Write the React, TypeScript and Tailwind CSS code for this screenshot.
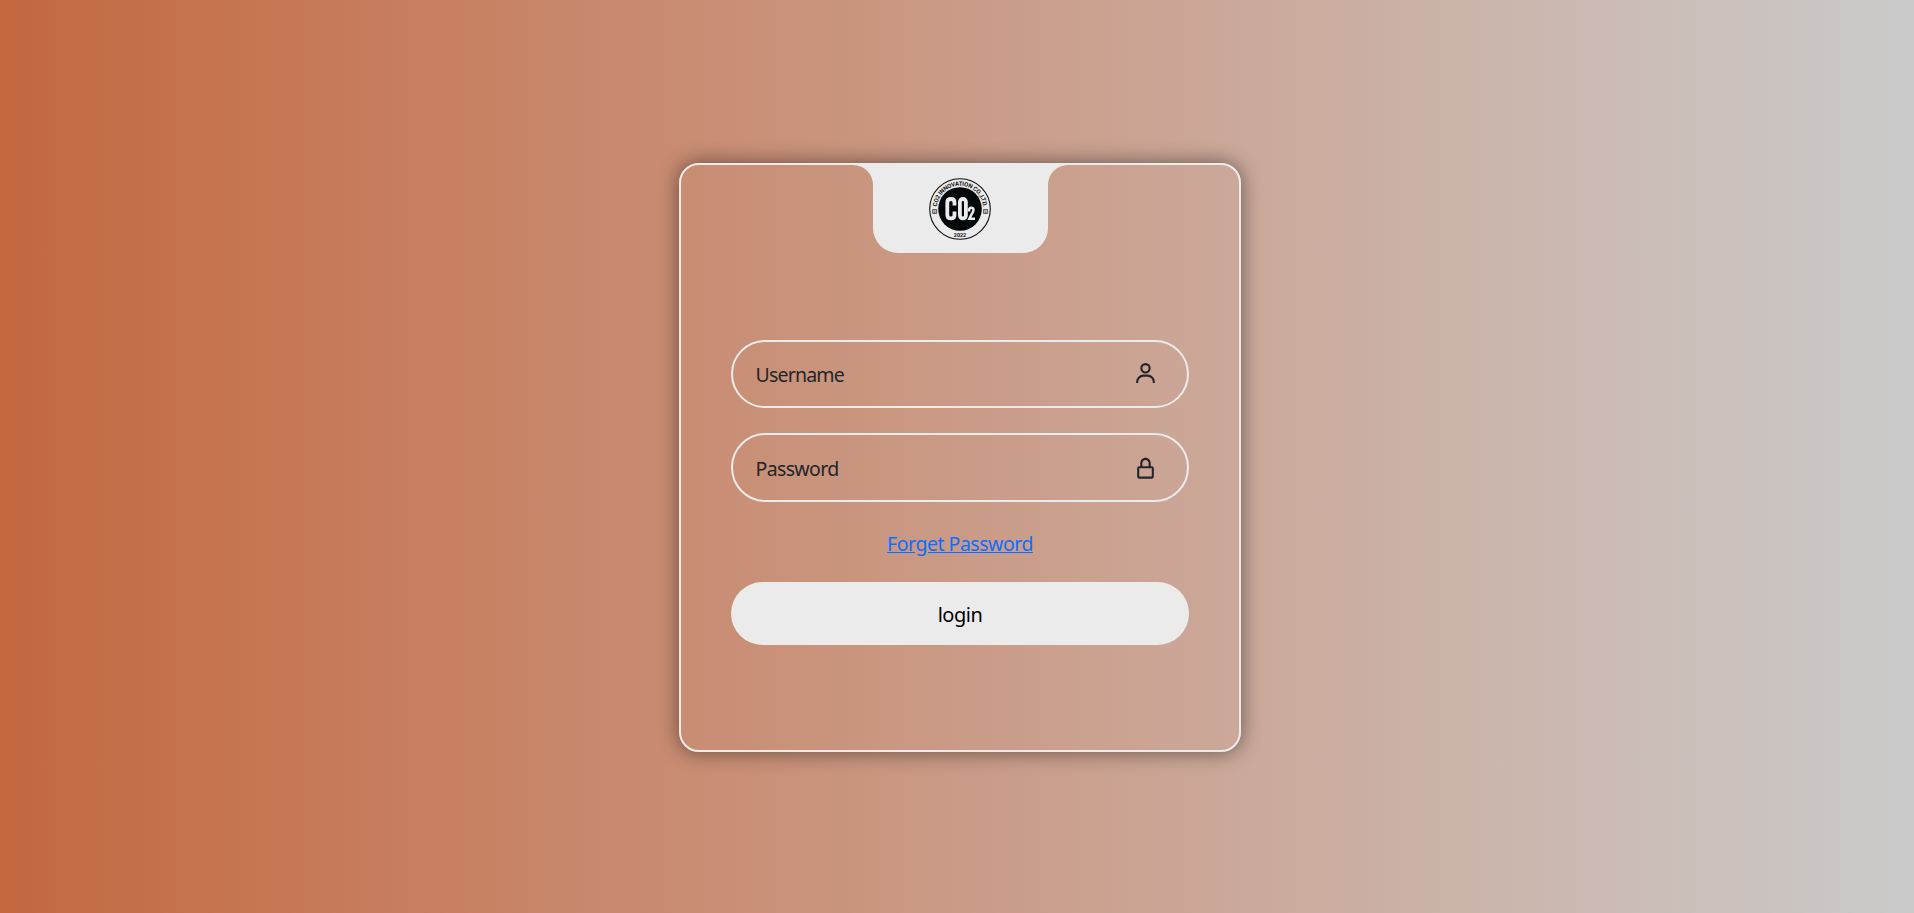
import type { ReactNode } from "react";

function Logo() {
  return (
    <svg viewBox="0 0 62 62" className="h-[62px] w-[62px]" aria-label="CO2 Innovation">
      <defs>
        <path id="ring-top" d="M 7.7 31 A 23.3 23.3 0 0 1 54.3 31" />
      </defs>
      <circle cx="31" cy="31" r="30.3" fill="none" stroke="#0b0f0f" strokeWidth="1.1" />
      <circle cx="31" cy="31" r="21.8" fill="#030808" />
      <text fontFamily="Roboto, sans-serif" fontWeight="700" fontSize="6" letterSpacing="-0.2" fill="#111">
        <textPath href="#ring-top" startOffset="50%" textAnchor="middle">
          CO2 INNOVATION CO.,LTD.
        </textPath>
      </text>
      <text
        x="31"
        y="59"
        textAnchor="middle"
        fontFamily="Roboto, sans-serif"
        fontWeight="700"
        fontSize="5.4"
        fill="#111"
      >
        2022
      </text>
      <g fill="none" stroke="#222" strokeWidth="0.7">
        <path d="M3.6 31.5h4v4h-4zM4.6 33h2M4.6 34.3h2" />
        <path d="M54.6 31.5h4v4h-4zM55.6 33h2M55.6 34.3h2" />
      </g>
      <g fill="none" stroke="#ececec" strokeWidth="3.8">
        <path d="M25.5 27.5V24.4Q25.5 21 21.9 21T18.3 24.4V37Q18.3 40.4 21.9 40.4T25.5 37V33.5" />
        <rect x="30.9" y="21" width="6" height="19.4" rx="2.9" />
        <path strokeWidth="2.5" d="M40.1 33.4V32.2Q40.1 29.7 42.3 29.7T44.5 32Q44.5 33.8 42.6 36.2L40.4 40.8H46" />
      </g>
    </svg>
  );
}

function Field({ label, className, children }: { label: ReactNode; className: string; children: ReactNode }) {
  return (
    <div
      className={`flex items-center justify-between rounded-full border-2 border-[#ebebeb] pl-[22.5px] pr-[29px] text-[#212529] ${className}`}
    >
      {label}
      <svg viewBox="0 0 24 24" className="mb-px h-[25px] w-[25px]" fill="currentColor">
        {children}
      </svg>
    </div>
  );
}

export default function App() {
  return (
    <main className="flex h-screen min-h-[913px] justify-center bg-linear-to-r from-[#c3683f] to-[#cacaca] pl-[6px] pt-[163px] font-['Noto_Sans',sans-serif]">
      <section className="flex h-[589px] w-[562px] flex-col items-center rounded-[20px] border-2 border-[#ebebeb] px-[50px] shadow-[0_0_20px_1px_rgba(0,0,0,0.45)]">
        <header className="relative flex h-[88px] w-[175px] shrink-0 justify-center rounded-b-[25px] bg-[#ebebeb] pt-[13px]">
          <Logo />
          <svg viewBox="0 0 20 20" className="absolute -left-5 top-0 h-5 w-5" fill="#ebebeb">
            <path d="M0 0H20V20A20 20 0 0 0 0 0Z" />
          </svg>
          <svg viewBox="0 0 20 20" className="absolute -right-5 top-0 h-5 w-5" fill="#ebebeb">
            <path d="M20 0H0V20A20 20 0 0 1 20 0Z" />
          </svg>
        </header>
        <form className="mt-[87px] flex w-full flex-col">
          <Field
            className="h-[68px]"
            label={<span className="pt-px text-[19.5px] leading-[30px] tracking-[-0.8px]">Username</span>}
          >
            <path d="M12 2a5 5 0 1 0 5 5 5 5 0 0 0-5-5zm0 8a3 3 0 1 1 3-3 3 3 0 0 1-3 3zm9 11v-1a7 7 0 0 0-7-7h-4a7 7 0 0 0-7 7v1h2v-1a5 5 0 0 1 5-5h4a5 5 0 0 1 5 5v1z" />
          </Field>
          <Field
            className="mt-[25px] h-[69px]"
            label={<span className="pt-[3px] text-[19.5px] leading-[30px] tracking-[-0.65px]">Password</span>}
          >
            <path
              transform="translate(0 0.7)"
              d="M12 2C9.243 2 7 4.243 7 7v3H6c-1.103 0-2 .897-2 2v8c0 1.103.897 2 2 2h12c1.103 0 2-.897 2-2v-8c0-1.103-.897-2-2-2h-1V7c0-2.757-2.243-5-5-5zm6 10 .002 8H6v-8h12zm-9-2V7c0-1.654 1.346-3 3-3s3 1.346 3 3v3H9z"
            />
          </Field>
          <a className="mt-[27px] self-center text-[19.5px] leading-[30px] tracking-[-0.48px] text-[#0d6efd] underline">
            Forget Password
          </a>
          <button
            type="button"
            className="mt-[23px] h-[63px] rounded-full bg-[#ebebeb] pt-[2px] text-[20px] tracking-[-0.5px] text-black"
          >
            login
          </button>
        </form>
      </section>
    </main>
  );
}
